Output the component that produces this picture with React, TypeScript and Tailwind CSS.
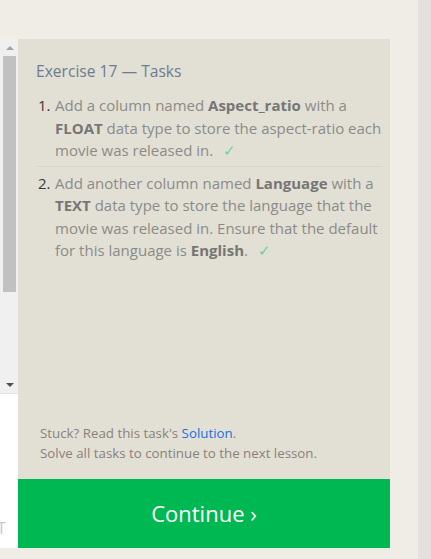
import React from 'react';

const font = { fontFamily: '"Open Sans", "Noto Sans", sans-serif' };

const Check = () => <span className="ml-[10px] text-[#6fd19a]">✓</span>;

const App: React.FC = () => {
  return (
    <div className="flex h-[559px] w-full overflow-hidden bg-[#f0ece6]" style={font}>
      {/* Left editor stub with scrollbar */}
      <div className="flex w-[18px] flex-col">
        <div className="h-[39px]" />
        <div className="flex h-[354px] flex-col bg-[#f0f0f0] pl-[3px] pr-[2px]">
          <div className="flex h-[17px] items-center justify-center">
            <div className="h-0 w-0 border-x-[4px] border-b-[4px] border-x-transparent border-b-[#a3a3a3]" />
          </div>
          <div className="h-[236px] bg-[#c1c1c1]" />
          <div className="flex-1" />
          <div className="flex h-[17px] items-center justify-center">
            <div className="h-0 w-0 border-x-[4px] border-t-[4px] border-x-transparent border-t-[#505050]" />
          </div>
        </div>
        <div className="flex h-[155px] flex-col justify-end overflow-hidden border-t border-[#e3e3e3] bg-white pb-[10px]">
          <span className="-ml-[3px] text-[16px] leading-5 text-[#c8c8c8]">T</span>
        </div>
      </div>

      {/* Task panel */}
      <div className="flex w-[372px] flex-col">
        <div className="h-[39px]" />
        <div className="flex flex-1 flex-col bg-[#e2e0d5] pl-[18px] pr-[8px]">
          <h2 className="mt-[22px] text-[15.6px] leading-5 text-[#6d7c8e]">Exercise 17 — Tasks</h2>
          <ol className="mt-[13px] text-[15px] leading-[22.5px] text-[#8b8b88]">
            <li className="flex border-b border-[#d8d5cb] pb-[4px]">
              <span className="w-[19px] shrink-0 pl-[2px] text-[#3a3a3a]">1.</span>
              <span>
                Add a column named <b className="text-[#767674]">Aspect_ratio</b> with a{' '}
                <b className="text-[#767674]">FLOAT</b> data type to store the aspect-ratio each movie was released in.
                <Check />
              </span>
            </li>
            <li className="flex pt-[5px]">
              <span className="w-[19px] shrink-0 pl-[2px] text-[#3a3a3a]">2.</span>
              <span>
                Add another column named <b className="text-[#767674]">Language</b> with a{' '}
                <b className="text-[#767674]">TEXT</b> data type to store the language that the movie was released in.
                Ensure that the default for this language is <b className="text-[#767674]">English</b>.
                <Check />
              </span>
            </li>
          </ol>
          <div className="flex-1" />
          <p className="mb-[16px] pl-[4px] text-[13.3px] leading-5 text-[#8a817a]">
            Stuck? Read this task's <span className="text-[#1a6fe0]">Solution</span>.
            <br />
            Solve all tasks to continue to the next lesson.
          </p>
        </div>
        <button className="flex h-[69px] items-center justify-center bg-[#00b852] text-[22px] text-white">
          Continue ›
        </button>
        <div className="h-[11px]" />
      </div>

      <div className="flex-1" />
      <div className="w-[13px] bg-[#e4e0dd]" />
    </div>
  );
};

export default App;
